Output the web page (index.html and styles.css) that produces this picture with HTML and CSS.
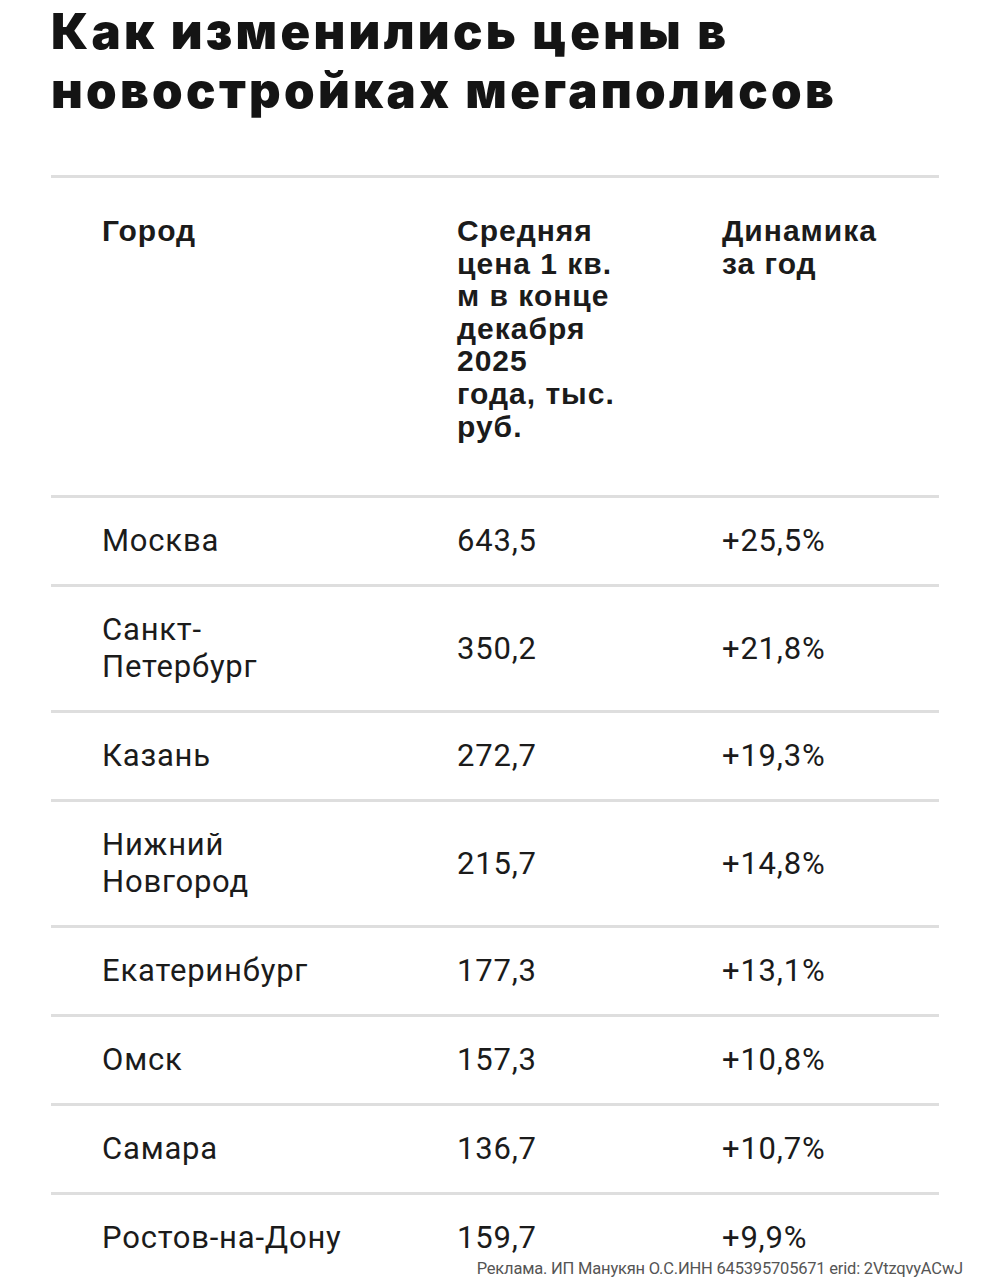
FILE: index.html
```html
<!DOCTYPE html>
<html lang="ru">
<head>
<meta charset="utf-8">
<title>Как изменились цены в новостройках мегаполисов</title>
<link rel="stylesheet" href="styles.css">
</head>
<body>
<main class="page">
  <h1 class="title">Как изменились цены в<br>новостройках мегаполисов</h1>
  <div class="table">
    <div class="row head">
      <div class="cell c1">Город</div>
      <div class="cell c2">Средняя<br>цена 1&nbsp;кв.<br>м в конце<br>декабря<br>2025<br>года, тыс.<br>руб.</div>
      <div class="cell c3">Динамика<br>за год</div>
    </div>
    <div class="row">
      <div class="cell c1">Москва</div>
      <div class="cell c2">643,5</div>
      <div class="cell c3">+25,5%</div>
    </div>
    <div class="row">
      <div class="cell c1">Санкт-<br>Петербург</div>
      <div class="cell c2">350,2</div>
      <div class="cell c3">+21,8%</div>
    </div>
    <div class="row">
      <div class="cell c1">Казань</div>
      <div class="cell c2">272,7</div>
      <div class="cell c3">+19,3%</div>
    </div>
    <div class="row">
      <div class="cell c1">Нижний<br>Новгород</div>
      <div class="cell c2">215,7</div>
      <div class="cell c3">+14,8%</div>
    </div>
    <div class="row">
      <div class="cell c1">Екатеринбург</div>
      <div class="cell c2">177,3</div>
      <div class="cell c3">+13,1%</div>
    </div>
    <div class="row">
      <div class="cell c1">Омск</div>
      <div class="cell c2">157,3</div>
      <div class="cell c3">+10,8%</div>
    </div>
    <div class="row">
      <div class="cell c1">Самара</div>
      <div class="cell c2">136,7</div>
      <div class="cell c3">+10,7%</div>
    </div>
    <div class="row last">
      <div class="cell c1">Ростов-на-Дону</div>
      <div class="cell c2">159,7</div>
      <div class="cell c3">+9,9%</div>
    </div>
  </div>
  <p class="ad">Реклама. ИП Манукян О.С.ИНН 645395705671 erid: 2VtzqvyACwJ</p>
</main>
</body>
</html>
```

FILE: styles.css
```css
html, body {
  margin: 0;
  padding: 0;
  background: #ffffff;
}

.page {
  width: 888px;
  margin-left: 51px;
  color: #1b1b1b;
  font-family: Roboto, "Liberation Sans", sans-serif;
}

.title {
  margin: 0;
  padding-top: 2px;
  font-family: Inter, "Liberation Sans", Arial, sans-serif;
  font-weight: 900;
  font-size: 49px;
  line-height: 59px;
  letter-spacing: 3.3px;
  color: #141414;
}

.table {
  margin-top: 55px;
  border-top: 3px solid #dedede;
}

.row {
  display: grid;
  grid-template-columns: 406px 265px 217px;
  align-items: center;
  border-bottom: 3px solid #dedede;
  padding: 24px 0 25px;
  font-size: 31px;
  line-height: 37px;
  letter-spacing: 0.8px;
}

.row.last {
  border-bottom: none;
  padding-bottom: 0;
}

.cell.c1 {
  padding-left: 51px;
}

.head {
  align-items: start;
  padding: 37px 0 52px;
  font-family: "Liberation Sans", Arial, sans-serif;
  font-weight: 700;
  font-size: 30px;
  line-height: 32.6px;
  letter-spacing: 1px;
}

.ad {
  margin: 3px -24px 0 0;
  text-align: right;
  font-size: 16.5px;
  line-height: 20px;
  color: #555555;
  letter-spacing: -0.2px;
}
```
